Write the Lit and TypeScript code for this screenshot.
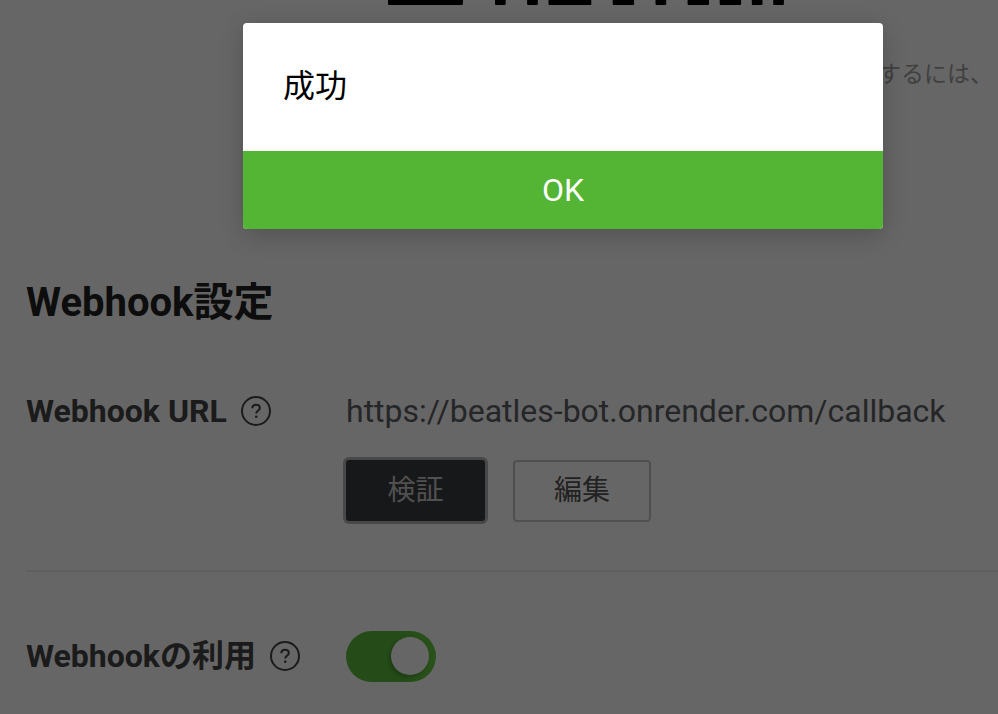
import { LitElement, html, css, svg } from "lit";
import { customElement } from "lit/decorators.js";

const help = html`<svg class="help" viewBox="0 0 30 30" width="30" height="30" aria-hidden="true">
  <circle cx="15" cy="15" r="14" fill="none" stroke="currentColor" stroke-width="2"></circle>
  <path d="M11.3 12.3c0-2.2 1.6-3.6 3.8-3.6s3.7 1.3 3.7 3.2c0 2.8-3.6 3-3.6 5.6" fill="none" stroke="currentColor" stroke-width="2"></path>
  <circle cx="15.2" cy="20.7" r="1.3" fill="currentColor"></circle>
</svg>`;

// Bottom row of the QR code, which the modal's page has scrolled almost out of view: [start, end] in modules.
const MODULE = 10.7;
const qrBottom: [number, number][] = [
  [0, 7], [10, 11], [13, 14], [15, 19], [21, 23], [25, 26], [28, 30], [31, 33], [34, 35], [36, 37],
];

@customElement("app-root")
export class AppRoot extends LitElement {
  static styles = css`
    :host {
      display: block;
      width: 998px;
      height: 714px;
      overflow: hidden;
      position: relative;
      background: #fff;
      font-family: Roboto, "Noto Sans CJK JP", sans-serif;
      color: #666;
    }
    .page {
      height: 714px;
      box-sizing: border-box;
      padding: 0 0 0 26px;
      display: flex;
      flex-direction: column;
    }
    .qr {
      display: block;
      flex: none;
      width: 396px;
      height: 5px;
      margin-left: 362px;
    }
    .intro {
      margin: 52px 0 0 0;
      font-size: 23px;
      line-height: 36px;
      color: #a0a0a0;
      text-align: right;
      white-space: nowrap;
      padding-right: 5px;
    }
    h2 {
      margin: 186px 0 0;
      font-size: 40px;
      line-height: 48px;
      font-weight: 700;
      color: #222;
    }
    .row { display: flex; }
    .label {
      display: flex;
      align-items: center;
      gap: 14px;
      font-size: 32px;
      line-height: 44px;
      font-weight: 700;
      color: #444;
      white-space: nowrap;
    }
    .help { color: #444; flex: none; }
    .url-row { margin-top: 62px; }
    .url-label { width: 320px; flex: none; height: 44px; }
    .value { font-size: 32px; line-height: 44px; color: #5e6063; white-space: nowrap; }
    .buttons {
      display: flex;
      align-items: center;
      gap: 25px;
      margin-top: 24px;
      margin-left: -3px;
    }
    button {
      font: inherit;
      font-size: 28px;
      box-sizing: border-box;
      border-radius: 4px;
      padding: 0 0 5px;
    }
    .verify {
      width: 145px;
      height: 67px;
      background: #3a3c41;
      color: #c8c8c8;
      border: 3px solid #b4b4b4;
      border-radius: 6px;
    }
    .edit {
      width: 138px;
      height: 62px;
      background: transparent;
      color: #555;
      border: 2px solid #c8c9cc;
    }
    hr {
      border: 0;
      height: 2px;
      background: #eee;
      margin: 46px 0 0;
    }
    .toggle-row { margin-top: 59px; align-items: center; }
    .toggle-label { width: 320px; flex: none; gap: 15px; height: 44px; }
    .toggle-text { margin-bottom: 2px; }
    .toggle-label .help { margin-bottom: 2px; margin-left: -1px; }
    .switch {
      width: 90px;
      height: 51px;
      border-radius: 26px;
      background: linear-gradient(90deg, #5cbf3c 60%, #6acc42);
      position: relative;
      flex: none;
    }
    .knob {
      position: absolute;
      top: 6px;
      left: 45px;
      width: 38px;
      height: 38px;
      border-radius: 50%;
      background: #fff;
      box-shadow: -2px 2px 4px rgba(0,0,0,.25);
    }
    .scrim {
      position: absolute;
      inset: 0;
      background: rgba(0, 0, 0, 0.6);
    }
    .modal {
      position: absolute;
      left: 243px;
      top: 23px;
      width: 640px;
      height: 206px;
      border-radius: 4px;
      overflow: hidden;
      background: #fff;
      display: flex;
      flex-direction: column;
      box-shadow: 0 6px 24px rgba(0,0,0,.2);
    }
    .msg {
      height: 128px;
      box-sizing: border-box;
      padding: 43px 40px 0;
      font-size: 32px;
      line-height: 40px;
      color: #000;
    }
    .ok {
      flex: 1;
      background: #54b535;
      color: #fff;
      font-size: 32px;
      font-weight: 400;
      display: flex;
      align-items: center;
      justify-content: center;
    }
  `;

  render() {
    return html`
      <div class="page">
        <svg class="qr" viewBox="0 0 396 5" aria-hidden="true">
          ${qrBottom.map(
            ([a, b]) => svg`<rect x=${a * MODULE} y="-3" width=${(b - a) * MODULE} height="8" rx="1" fill="#000"></rect>`
          )}
        </svg>
        <div class="intro">を利用するには、</div>
        <h2>Webhook設定</h2>
        <div class="row url-row">
          <div class="label url-label">Webhook URL ${help}</div>
          <div>
            <div class="value">https://beatles-bot.onrender.com/callback</div>
            <div class="buttons">
              <button class="verify">検証</button>
              <button class="edit">編集</button>
            </div>
          </div>
        </div>
        <hr />
        <div class="row toggle-row">
          <div class="label toggle-label"><span class="toggle-text">Webhookの利用</span> ${help}</div>
          <div class="switch"><span class="knob"></span></div>
        </div>
      </div>
      <div class="scrim"></div>
      <div class="modal">
        <div class="msg">成功</div>
        <div class="ok">OK</div>
      </div>
    `;
  }
}
